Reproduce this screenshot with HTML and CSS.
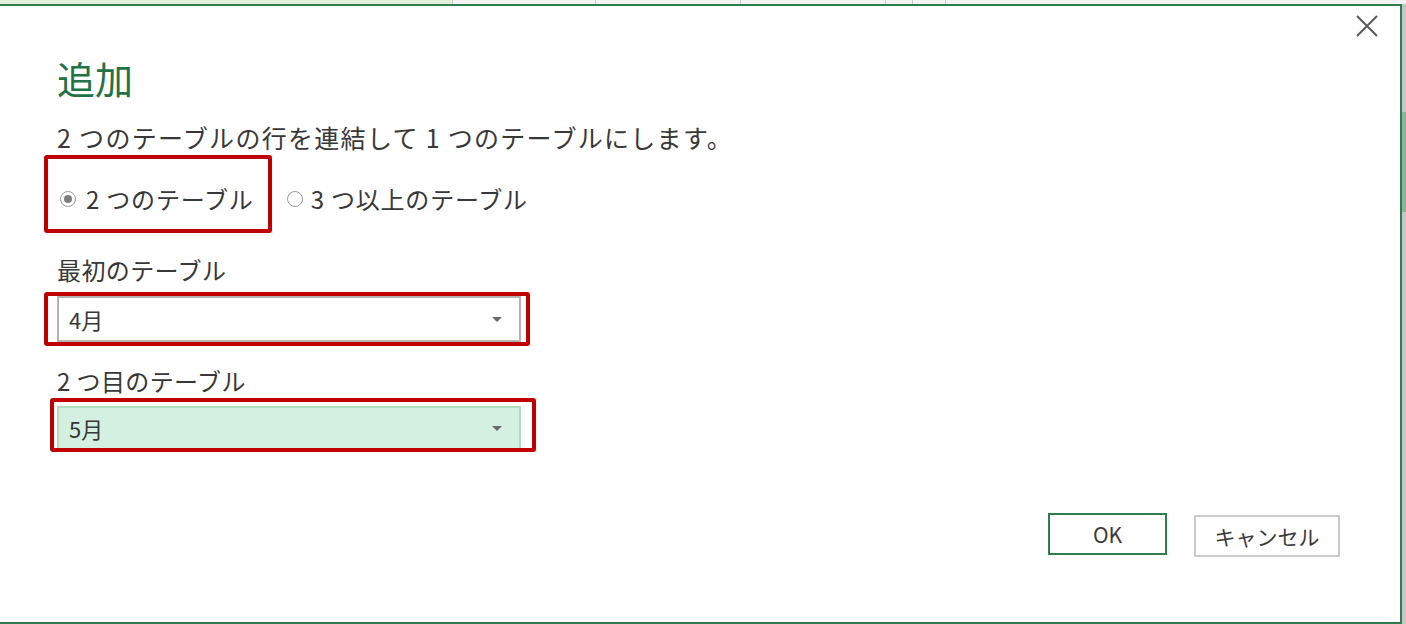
FILE: index.html
```html
<!DOCTYPE html>
<html lang="ja">
<head>
  <meta charset="UTF-8" />
  <title>追加</title>
  <link rel="stylesheet" href="styles.css">
</head>
<body>
  <div class="sheet-top">
    <div class="sheet-cell sel"></div>
    <div class="sheet-cell w142"></div>
    <div class="sheet-cell w145"></div>
    <div class="sheet-cell w145"></div>
    <div class="sheet-cell w27"></div>
    <div class="sheet-cell w33"></div>
    <div class="sheet-cell rest"></div>
  </div>

  <div class="frame">
    <div class="dialog">
      <div class="head">
        <h1 class="title">追加</h1>
        <button class="close" aria-label="閉じる">
          <svg width="22" height="22" viewBox="0 0 22 22">
            <path d="M1 1 L21 21 M21 1 L1 21" stroke="#5a5a5a" stroke-width="2" fill="none"/>
          </svg>
        </button>
      </div>

      <p class="desc">2 つのテーブルの行を連結して 1 つのテーブルにします。</p>

      <div class="radios">
        <label class="radio"><span class="dot on"></span>2 つのテーブル</label>
        <label class="radio"><span class="dot"></span>3 つ以上のテーブル</label>
      </div>

      <div class="field-label first">最初のテーブル</div>
      <div class="select">
        <span>4月</span>
        <span class="caret"></span>
      </div>

      <div class="field-label">2 つ目のテーブル</div>
      <div class="select active">
        <span>5月</span>
        <span class="caret"></span>
      </div>

      <div class="actions">
        <button class="btn ok">OK</button>
        <button class="btn">キャンセル</button>
      </div>

      <!-- red annotation boxes over the form -->
      <div class="mark mark-radio"></div>
      <div class="mark mark-first"></div>
      <div class="mark mark-second"></div>
    </div>
    <div class="scroll">
      <div class="thumb"></div>
    </div>
  </div>
</body>
</html>
```

FILE: styles.css
```css
body {
  margin: 0;
  width: 1406px;
  height: 624px;
  overflow: hidden;
  background: #f3f3f3;
  font-family: "Noto Sans CJK JP", "Noto Sans", sans-serif;
  color: #383838;
}

.sheet-top {
  display: flex;
  height: 4px;
  background: #f3f3f3;
}

.sheet-cell {
  border-right: 1px solid #c9c9c9;
}

.sheet-cell.sel {
  width: 452px;
  background: #e3efda;
}

.w142 { width: 142px; }
.w145 { width: 144px; }
.w27 { width: 26px; }
.w33 { width: 32px; }
.rest { flex: 1; border-right: none; }

.frame {
  display: flex;
  height: 620px;
}

.dialog {
  position: relative;
  flex: 1;
  background: #fff;
  border-top: 2px solid #2f7d4f;
  border-right: 2px solid #2f7d4f;
  border-bottom: 2px solid #2f7d4f;
  padding-left: 57px;
}

.scroll {
  width: 4px;
  background: #c6c6c6;
  padding-top: 108px;
}

.thumb {
  height: 100px;
  background: #8fb39d;
}

.head {
  display: flex;
  justify-content: space-between;
  align-items: flex-start;
}

.title {
  margin: 49px 0 0;
  font-size: 38px;
  line-height: 46px;
  font-weight: normal;
  color: #217346;
}

.close {
  margin: 9px 22px 0 0;
  padding: 0;
  width: 22px;
  height: 22px;
  border: none;
  background: none;
}

.desc {
  margin: 20px 0 0;
  font-size: 25px;
  line-height: 32px;
  letter-spacing: 1.3px;
}

.radios {
  display: flex;
  margin-top: 30px;
  gap: 30px;
  font-size: 24px;
  line-height: 32px;
  letter-spacing: 0.8px;
}

.radio {
  display: flex;
  align-items: center;
  padding-left: 3px;
}

.dot {
  flex: none;
  box-sizing: border-box;
  width: 16px;
  height: 16px;
  border: 1px solid #9d9d9d;
  border-radius: 50%;
  margin-right: 10px;
  display: flex;
  align-items: center;
  justify-content: center;
}

.radio + .radio .dot {
  margin-right: 8px;
}

.dot.on::after {
  content: "";
  width: 8px;
  height: 8px;
  border-radius: 50%;
  background: #7d7d7d;
}

.field-label {
  margin-top: 23px;
  font-size: 24px;
  line-height: 32px;
  letter-spacing: 0.4px;
}

.field-label.first {
  margin-top: 39px;
}

.select {
  display: flex;
  justify-content: space-between;
  align-items: center;
  box-sizing: border-box;
  width: 464px;
  height: 46px;
  margin-top: 10px;
  padding: 0 17px 0 10px;
  border: 2px solid #b4b4b4;
  font-size: 22px;
}

.select.active {
  margin-top: 9px;
  height: 44px;
  background: #d4f0e1;
  border-color: #b3dcc3;
}

.caret {
  width: 0;
  height: 0;
  border-left: 5px solid transparent;
  border-right: 5px solid transparent;
  border-top: 5px solid #6a6a6a;
}

.actions {
  display: flex;
  justify-content: flex-end;
  align-items: flex-start;
  gap: 27px;
  margin: 63px 60px 0 0;
}

.btn {
  box-sizing: border-box;
  height: 42px;
  min-width: 146px;
  padding: 0 18px;
  background: #fff;
  border: 2px solid #cacaca;
  font-family: "Noto Sans CJK JP", "Noto Sans", sans-serif;
  font-size: 21px;
  color: #3a3a3a;
  margin-top: 2px;
}

.btn.ok {
  min-width: 119px;
  border-color: #2f7d4f;
  margin-top: 0;
}

.mark {
  position: absolute;
  border: 4px solid #c00000;
  border-radius: 3px;
}

.mark-radio {
  left: 44px;
  top: 149px;
  width: 220px;
  height: 70px;
}

.mark-first {
  left: 44px;
  top: 286px;
  width: 478px;
  height: 46px;
}

.mark-second {
  left: 50px;
  top: 392px;
  width: 478px;
  height: 46px;
}
```
